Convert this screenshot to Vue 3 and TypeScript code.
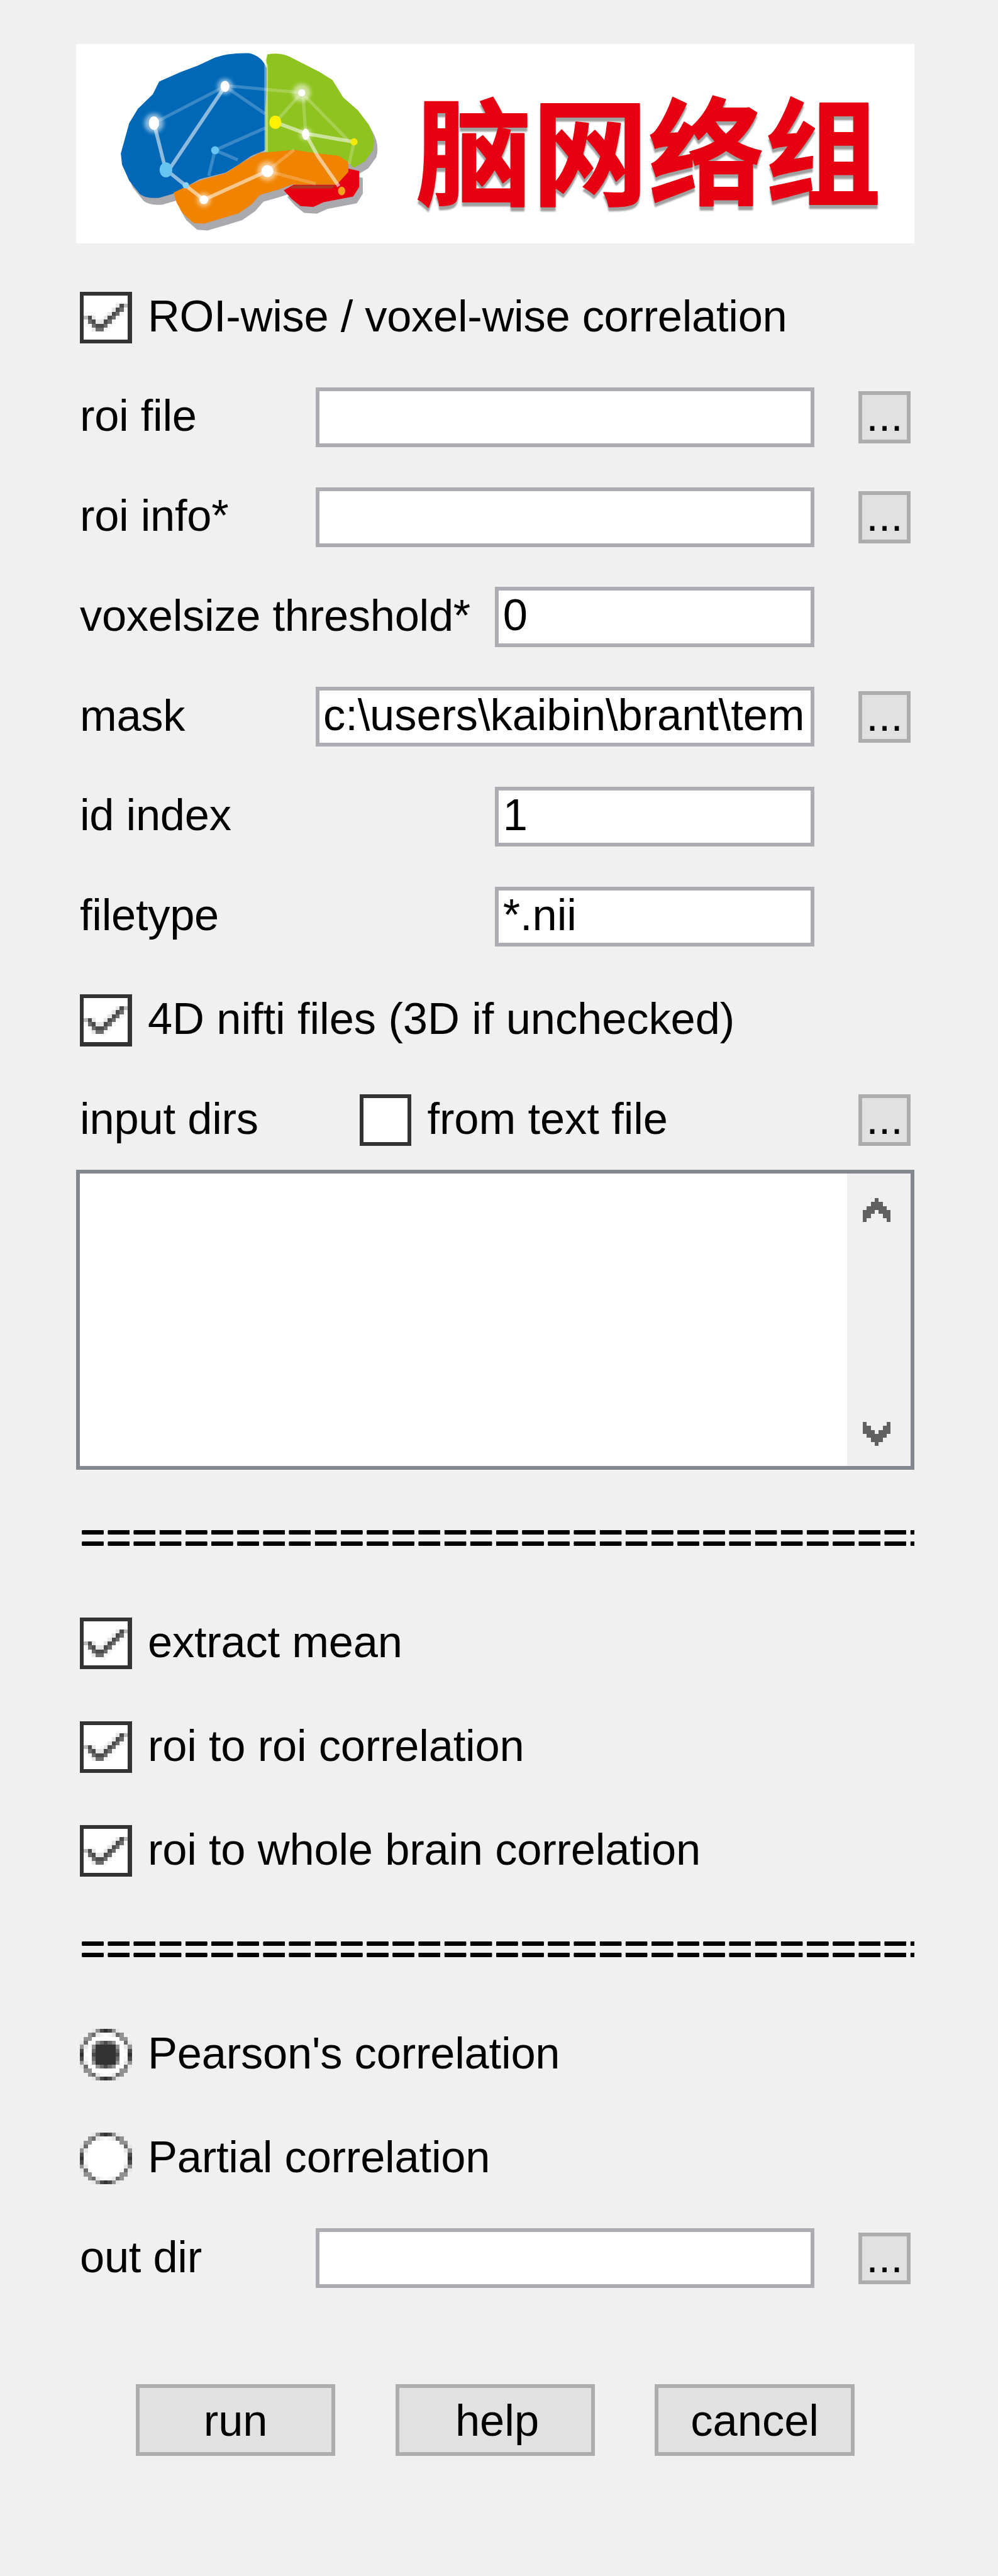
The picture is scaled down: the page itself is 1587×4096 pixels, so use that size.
<script setup lang="ts">
interface Field {
  label: string
  value: string
  browse: boolean
}

interface Pixel {
  x: number
  y: number
  fill: string
}

const fields: Field[] = [
  { label: 'roi file', value: '', browse: true },
  { label: 'roi info*', value: '', browse: true },
  { label: 'voxelsize threshold*', value: '0', browse: false },
  { label: 'mask', value: 'c:\\users\\kaibin\\brant\\tem', browse: true },
  { label: 'id index', value: '1', browse: false },
  { label: 'filetype', value: '*.nii', browse: false },
]

const outputs: string[] = ['extract mean', 'roi to roi correlation', 'roi to whole brain correlation']

const methods = [
  { label: "Pearson's correlation", selected: true },
  { label: 'Partial correlation', selected: false },
]

const actions: string[] = ['run', 'help', 'cancel']

const rule = '='.repeat(33)

const shades: Record<string, string> = {
  k: '#333333',
  d: '#4b4b4b',
  m: '#6c6c6c',
  g: '#929292',
  b: '#b9b9b9',
  l: '#e6e6e6',
  f: '#f6f6f6',
  w: '#ffffff',
}

function pixels(rows: string[]): Pixel[] {
  return rows.flatMap((row, y) =>
    [...row].flatMap((c, x) => (shades[c] ? [{ x, y, fill: shades[c] }] : [])),
  )
}

const tick = pixels([
  '.............',
  '.............',
  '.............',
  '.........ldb.',
  '........ldmf.',
  '.......ldmf..',
  '.bdl..ldmf...',
  '.fmdlldmf....',
  '..fmddmf.....',
  '...lmmf......',
])

const ring = [
  '...lgdkdgl...',
  '..gmlfwflmg..',
  '.ggwwwwwwwgg.',
  'lmwwwwwwwwwml',
  'glwwwwwwwwwlg',
  'dfwwwwwwwwwfd',
  'kwwwwwwwwwwwk',
  'dfwwwwwwwwwfd',
  'glwwwwwwwwwlg',
  'lmwwwwwwwwwml',
  '.ggwwwwwwwgg.',
  '..gmlfwflmg..',
  '...lgdkdgl...',
]

const radioOff = pixels(ring)
const radioOn = pixels([
  ...ring.slice(0, 3),
  'lmwwgmdmgwwml',
  'glwgkkkkkgwlg',
  'dfwmkkkkkmwfd',
  'kwwdkkkkkdwwk',
  'dfwmkkkkkmwfd',
  'glwgkkkkkgwlg',
  'lmwwgmdmgwwml',
  ...ring.slice(10),
])
</script>

<template>
  <main class="dialog">
    <svg class="logo" viewBox="0 0 210 50">
      <defs>
        <path id="lobe-blue" d="M11.2 27.4L13.3 19.8 15.5 16.2 19.2 12.6 20.8 9.4 26.2 7 30.5 5.4 34.8 3.4Q38 2.2 43.3 2.3Q46.5 3 47.7 6V26.4L43.9 28 40.7 30.2 37.4 32.2 31 33.8 27.8 35.6 24.6 37.4 20.8 38.5Q17.5 38.8 16 37.6L13.3 34.2 11.5 30.2Z" />
        <path id="lobe-green" d="M47.6 4L47.9 2.6Q51 2 53.5 3.2L61 7 64.2 9 66.9 13.4 70.6 16.6 73.3 20.2Q75.2 23.5 74.3 26.6L72.3 29.4 69.6 31 68 29.6 60 27.4H47.4V16Q48 8 47.6 4Z" />
        <path id="lobe-orange" d="M24.4 37.2L27.8 35.6 31.5 34 37.4 32.4 42.2 29.3 46 27.3 54.6 26.5 60.5 27.4 65.8 28 68.2 29.6V32L65.3 35.2H54L50.8 36.4 46 37.8 43.9 40.2 40.7 42.4 37.4 43.4 32 45 29.4 44.8 26.7 42.4 25.2 39.8Z" />
        <path id="lobe-red" d="M52 36.6L54.6 35.2H65.3L68.2 31.2 70.9 31.8V35.8L69.4 38.2 62 39.6 59.4 40.8 56.2 40.6 54 38.8Z" />
      </defs>
      <g class="brain-shadow" transform="translate(.9 1.7)">
        <use href="#lobe-blue" />
        <use href="#lobe-green" />
        <use href="#lobe-orange" />
        <use href="#lobe-red" />
      </g>
      <use href="#lobe-blue" fill="#0068b7" />
      <use href="#lobe-green" fill="#8fc31f" />
      <use href="#lobe-red" fill="#e60012" />
      <use href="#lobe-orange" fill="#f08300" />
      <path d="M54.5 35.4H65L64 36.2H53.5Z" fill="#a83a22" />
      <g fill="none" stroke="#ffffff">
        <path stroke-width=".8" opacity=".22" d="M37.3 10.6L19.5 19.8M37.3 10.4L56.5 12.2M37.3 10.6L47.4 17.5M34.8 26.6L47.4 21M34.8 26.6L33.2 33M34.8 26.6L40.5 29M56.5 12.2L49.9 19.6M56.8 12.2L57.5 22.6M56.5 12.2L68 24M69.6 24.5L68.4 30M47.9 31.8L54.6 26.5M47.9 31.8L60 35" />
        <path stroke-width=".9" opacity=".4" d="M47.6 5V27" />
        <path stroke-width=".9" opacity=".55" d="M37.3 10.6L23.6 31M19.5 19.8L22.4 31.4L27.4 35.4L32 39L47.9 31.8M49.9 19.6L57.5 22.4L69.6 24.5M57.5 22.6L60.5 28L65.8 35.6" />
      </g>
      <g class="glow">
        <circle cx="37.3" cy="10.6" r="1.9" />
        <circle cx="19.5" cy="19.8" r="2.4" />
        <circle cx="56.5" cy="12.2" r="2.2" />
        <circle cx="57.5" cy="22.6" r="1.5" />
        <circle cx="47.9" cy="31.8" r="2.4" />
        <circle cx="32" cy="39" r="1.7" />
      </g>
      <g fill="#ffffff">
        <ellipse cx="37.3" cy="10.6" rx="1.1" ry="1.4" />
        <ellipse cx="19.5" cy="19.8" rx="1.3" ry="1.7" />
        <circle cx="56.5" cy="12.2" r=".9" />
        <ellipse cx="57.5" cy="22.6" rx=".9" ry="1.4" />
        <circle cx="47.9" cy="31.8" r="1.5" />
        <circle cx="32" cy="39" r="1.1" />
      </g>
      <ellipse cx="22.5" cy="31.5" rx="1.6" ry="1.9" fill="#68c5f2" />
      <circle cx="34.8" cy="26.6" r="1" fill="#68c5f2" />
      <circle cx="27.5" cy="35.4" r=".8" fill="#8ed2f8" />
      <ellipse cx="49.9" cy="19.6" rx="1.5" ry="1.7" fill="#fff100" />
      <circle cx="69.6" cy="24.5" r=".9" fill="#f5e90a" />
      <ellipse cx="66.5" cy="36.8" rx=".9" ry="1.1" fill="#f9a01e" />
      <text class="wordmark" x="85.2 114.2 143.4 172.5" y="38.1">脑网络组</text>
    </svg>

    <div class="check-row first">
      <svg class="mark box" viewBox="0 0 13 13">
        <rect v-for="(p, i) in tick" :key="i" :x="p.x" :y="p.y" width="1" height="1" :fill="p.fill" />
        <rect class="frame" x=".5" y=".5" width="12" height="12" />
      </svg>
      <span class="text">ROI-wise / voxel-wise correlation</span>
    </div>

    <div class="fields">
      <div v-for="f in fields" :key="f.label" class="field-row">
        <span class="text label">{{ f.label }}</span>
        <div class="field" :class="{ short: !f.browse }">{{ f.value }}</div>
        <button v-if="f.browse" class="browse">...</button>
      </div>
    </div>

    <div class="check-row nifti">
      <svg class="mark box" viewBox="0 0 13 13">
        <rect v-for="(p, i) in tick" :key="i" :x="p.x" :y="p.y" width="1" height="1" :fill="p.fill" />
        <rect class="frame" x=".5" y=".5" width="12" height="12" />
      </svg>
      <span class="text">4D nifti files (3D if unchecked)</span>
    </div>

    <div class="check-row dirs">
      <span class="text dirs-label">input dirs</span>
      <svg class="mark box" viewBox="0 0 13 13">
        <rect class="frame" x=".5" y=".5" width="12" height="12" />
      </svg>
      <span class="text">from text file</span>
      <button class="browse">...</button>
    </div>

    <div class="list">
      <div class="scrollbar">
        <svg class="arrow" viewBox="0 0 7 6">
          <path d="M3 0H4V1H5V2H6V3H7V6H6V5H5V4H4V3H3V4H2V5H1V6H0V3H1V2H2V1H3Z" />
        </svg>
        <svg class="arrow" viewBox="0 0 7 6">
          <path d="M3 6H4V5H5V4H6V3H7V0H6V1H5V2H4V3H3V2H2V1H1V0H0V3H1V4H2V5H3Z" />
        </svg>
      </div>
    </div>

    <div class="text rule">{{ rule }}</div>

    <div class="options outputs">
      <div v-for="o in outputs" :key="o" class="check-row">
        <svg class="mark box" viewBox="0 0 13 13">
          <rect v-for="(p, i) in tick" :key="i" :x="p.x" :y="p.y" width="1" height="1" :fill="p.fill" />
          <rect class="frame" x=".5" y=".5" width="12" height="12" />
        </svg>
        <span class="text">{{ o }}</span>
      </div>
    </div>

    <div class="text rule">{{ rule }}</div>

    <div class="options methods">
      <div v-for="m in methods" :key="m.label" class="check-row">
        <svg class="mark" viewBox="0 0 13 13">
          <rect
            v-for="(p, i) in m.selected ? radioOn : radioOff"
            :key="i" :x="p.x" :y="p.y" width="1" height="1" :fill="p.fill"
          />
        </svg>
        <span class="text">{{ m.label }}</span>
      </div>
    </div>

    <div class="field-row out">
      <span class="text label">out dir</span>
      <div class="field"></div>
      <button class="browse">...</button>
    </div>

    <div class="actions">
      <button v-for="a in actions" :key="a" class="action" :class="a">{{ a }}</button>
    </div>
  </main>
</template>

<style>
body {
  margin: 0;
  background: #f0f0f0;
}
</style>

<style scoped>
.dialog {
  --u: 6.35px;
  box-sizing: border-box;
  width: 100%;
  height: 4096px;
  padding: calc(11 * var(--u)) calc(21 * var(--u)) 0 calc(20 * var(--u));
  display: flex;
  flex-direction: column;
  overflow: hidden;
  background: #f0f0f0;
  color: #000;
  font-family: "Liberation Sans", Arial, sans-serif;
  font-size: 70.5px;
  line-height: calc(12.4 * var(--u));
}

.dialog > * {
  flex: none;
}

.logo {
  display: block;
  width: calc(210 * var(--u));
  height: calc(50 * var(--u));
  margin-left: calc(-1 * var(--u));
  background: #fff;
}

.brain-shadow {
  fill: #8d8d94;
  opacity: 0.75;
}

.glow {
  fill: #fff;
  opacity: 0.55;
  filter: blur(0.5px);
}

.wordmark {
  font-family: "Noto Sans CJK SC", sans-serif;
  font-size: 29px;
  font-weight: 700;
  fill: #e60012;
  stroke: #e60012;
  stroke-width: 0.35px;
  stroke-linejoin: round;
  filter: drop-shadow(0.3px 1.5px 0.2px #9fa0a0);
}

.text {
  letter-spacing: -0.22px;
  white-space: nowrap;
}

.first .text {
  letter-spacing: -0.3px;
}

.nifti .text,
.dirs .mark + .text {
  letter-spacing: -0.1px;
}

.label {
  letter-spacing: -0.3px;
}

.check-row {
  display: flex;
  align-items: flex-start;
  height: calc(13 * var(--u));
}

.check-row.first {
  margin-top: calc(12 * var(--u));
}

.mark {
  flex: none;
  display: block;
  width: calc(13 * var(--u));
  height: calc(13 * var(--u));
  margin-right: calc(4 * var(--u));
  shape-rendering: crispEdges;
}

.mark.box {
  background: #fff;
}

.frame {
  fill: none;
  stroke: #333;
  stroke-width: 1;
}

.fields {
  margin-top: calc(11 * var(--u));
  display: flex;
  flex-direction: column;
  gap: calc(10 * var(--u));
}

.field-row {
  display: flex;
  align-items: flex-start;
  width: calc(208 * var(--u));
  height: calc(15 * var(--u));
}

.label {
  flex: 1;
  min-width: 0;
  margin-top: var(--u);
}

.field {
  flex: none;
  box-sizing: border-box;
  width: calc(125 * var(--u));
  height: calc(15 * var(--u));
  padding-left: var(--u);
  border: var(--u) solid #abadb3;
  background: #fff;
  letter-spacing: -0.1px;
  white-space: nowrap;
  overflow: hidden;
}

.field.short {
  width: calc(80 * var(--u));
  margin-right: calc(24 * var(--u));
}

button {
  flex: none;
  box-sizing: border-box;
  margin: 0;
  border: var(--u) solid #adadad;
  border-radius: 0;
  background: #e1e1e1;
  color: #000;
  font: inherit;
  text-align: center;
}

.browse {
  display: flex;
  justify-content: center;
  align-items: flex-start;
  width: calc(13 * var(--u));
  height: calc(13 * var(--u));
  margin: var(--u) 0 0 calc(11 * var(--u));
  padding: 0;
  line-height: calc(10.4 * var(--u));
}

.nifti,
.dirs {
  margin-top: calc(12 * var(--u));
}

.dirs {
  width: calc(208 * var(--u));
}

.dirs-label {
  width: calc(70 * var(--u));
}

.dirs .browse {
  margin: 0 0 0 auto;
}

.list {
  box-sizing: border-box;
  display: flex;
  justify-content: flex-end;
  width: calc(210 * var(--u));
  height: calc(75 * var(--u));
  margin: calc(6 * var(--u)) 0 0 calc(-1 * var(--u));
  border: var(--u) solid #828790;
  background: #fff;
}

.scrollbar {
  box-sizing: border-box;
  display: flex;
  flex-direction: column;
  justify-content: space-between;
  width: calc(16 * var(--u));
  padding: calc(6 * var(--u)) 0 calc(5 * var(--u)) calc(4 * var(--u));
  background: #f0f0f0;
}

.arrow {
  display: block;
  width: calc(7 * var(--u));
  height: calc(6 * var(--u));
  fill: #606060;
  shape-rendering: crispEdges;
}

.rule {
  width: calc(209 * var(--u));
  height: calc(13 * var(--u));
  margin-top: calc(11 * var(--u));
  line-height: calc(12 * var(--u));
  letter-spacing: 0;
  text-shadow: 0 0.7px 0 #000, 0 -0.7px 0 #000;
  overflow: hidden;
}

.options {
  display: flex;
  flex-direction: column;
  gap: calc(13 * var(--u));
}

.outputs {
  margin-top: calc(13 * var(--u));
}

.outputs + .rule {
  margin-top: calc(12 * var(--u));
}

.methods {
  margin-top: calc(13 * var(--u));
}

.out {
  margin-top: calc(11 * var(--u));
}

.actions {
  display: flex;
  gap: calc(15 * var(--u));
  margin: calc(24 * var(--u)) 0 0 calc(14 * var(--u));
}

.action {
  display: flex;
  justify-content: center;
  align-items: flex-start;
  width: calc(50 * var(--u));
  height: calc(18 * var(--u));
  padding: calc(2 * var(--u)) 0 0;
  line-height: calc(12.4 * var(--u));
}

.action.help {
  padding-left: var(--u);
}
</style>
